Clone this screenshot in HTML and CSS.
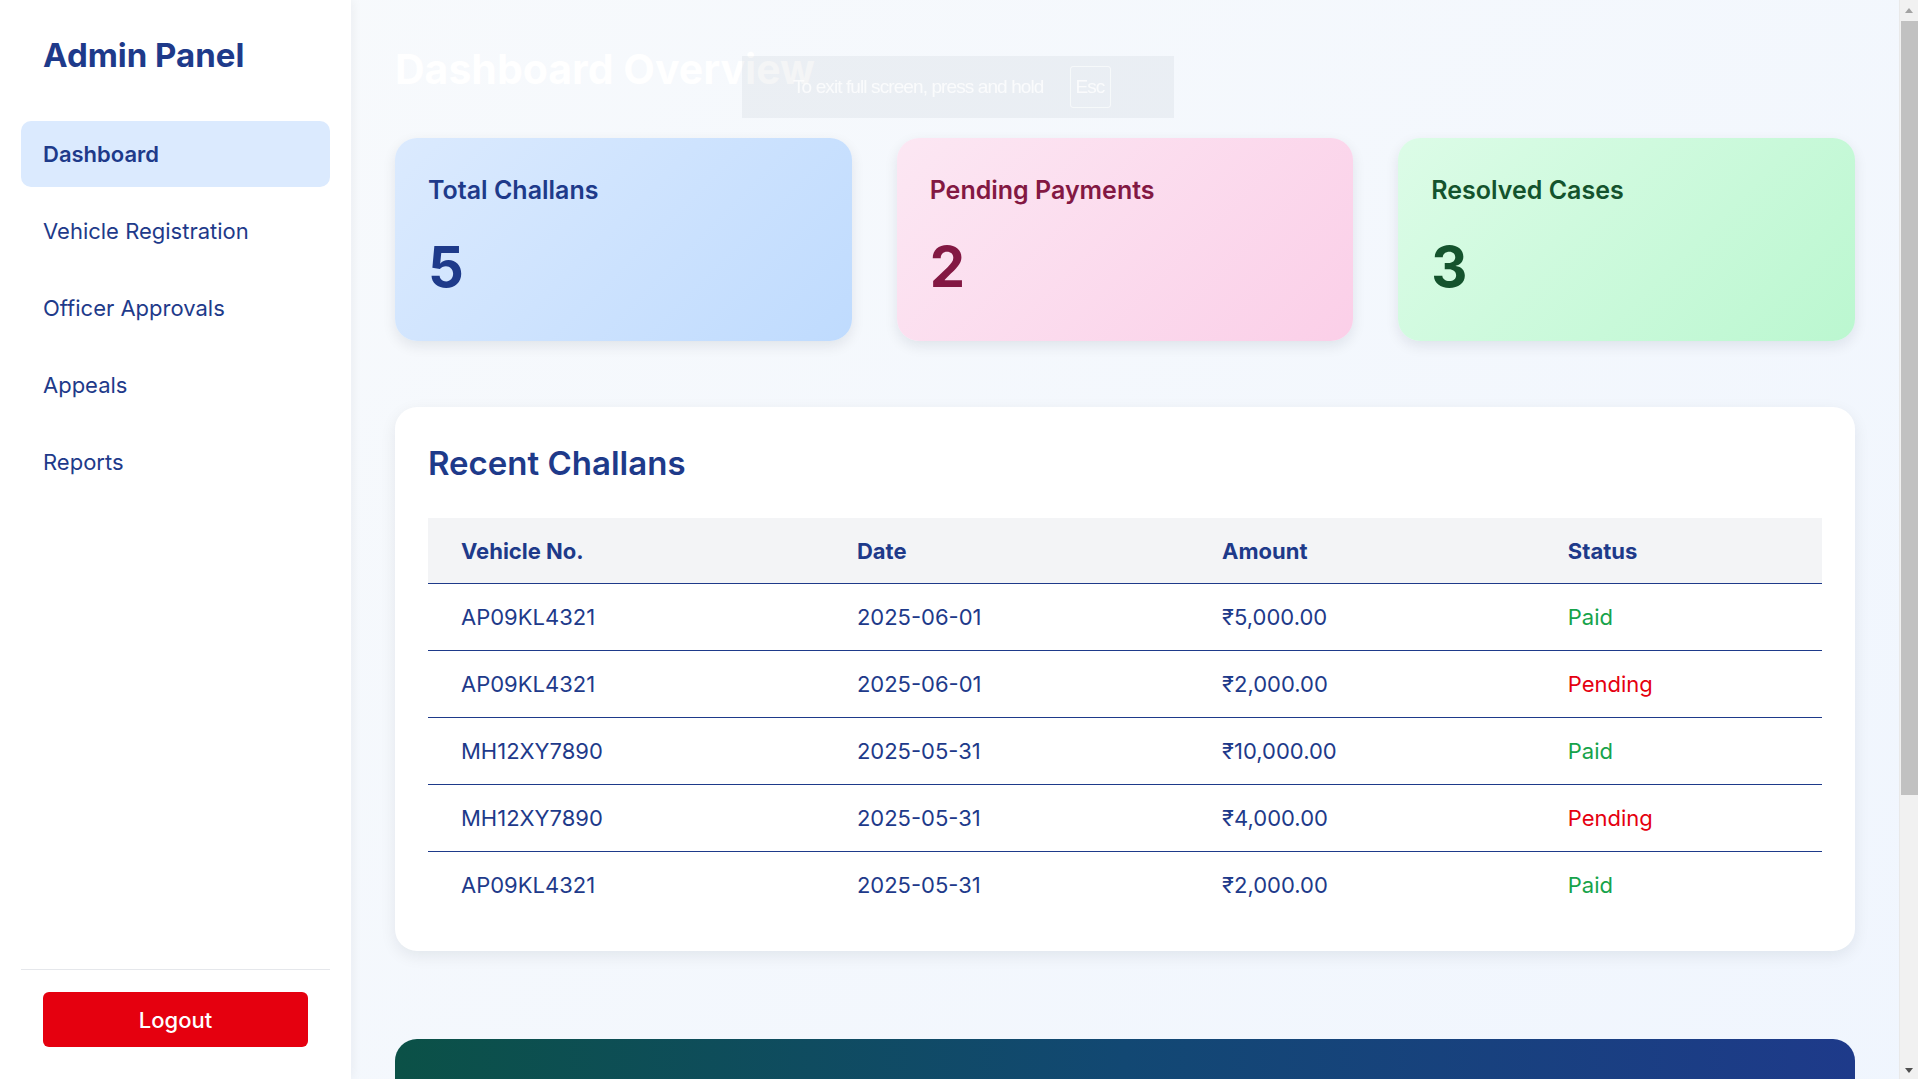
FILE: index.html
```html
<!DOCTYPE html>
<html lang="en">
<head>
<meta charset="utf-8">
<title>Admin Panel</title>
<link rel="stylesheet" href="styles.css">
</head>
<body>
<div class="layout">
  <aside class="sidebar">
    <h1 class="brand">Admin Panel</h1>
    <nav class="nav">
      <a class="nav-item active">Dashboard</a>
      <a class="nav-item">Vehicle Registration</a>
      <a class="nav-item">Officer Approvals</a>
      <a class="nav-item">Appeals</a>
      <a class="nav-item">Reports</a>
    </nav>
    <div class="sidebar-footer">
      <button class="logout">Logout</button>
    </div>
  </aside>

  <main class="main">
    <h2 class="page-title">Dashboard Overview</h2>

    <section class="stats">
      <div class="stat stat-blue">
        <h3 class="stat-label">Total Challans</h3>
        <p class="stat-value">5</p>
      </div>
      <div class="stat stat-pink">
        <h3 class="stat-label">Pending Payments</h3>
        <p class="stat-value">2</p>
      </div>
      <div class="stat stat-green">
        <h3 class="stat-label">Resolved Cases</h3>
        <p class="stat-value">3</p>
      </div>
    </section>

    <section class="panel">
      <h2 class="panel-title">Recent Challans</h2>
      <table class="table">
        <colgroup>
          <col class="col-vehicle">
          <col class="col-date">
          <col class="col-amount">
          <col class="col-status">
        </colgroup>
        <thead>
          <tr><th>Vehicle No.</th><th>Date</th><th>Amount</th><th>Status</th></tr>
        </thead>
        <tbody>
          <tr><td>AP09KL4321</td><td>2025-06-01</td><td>₹5,000.00</td><td class="paid">Paid</td></tr>
          <tr><td>AP09KL4321</td><td>2025-06-01</td><td>₹2,000.00</td><td class="pending">Pending</td></tr>
          <tr><td>MH12XY7890</td><td>2025-05-31</td><td>₹10,000.00</td><td class="paid">Paid</td></tr>
          <tr><td>MH12XY7890</td><td>2025-05-31</td><td>₹4,000.00</td><td class="pending">Pending</td></tr>
          <tr><td>AP09KL4321</td><td>2025-05-31</td><td>₹2,000.00</td><td class="paid">Paid</td></tr>
        </tbody>
      </table>
    </section>

    <section class="banner"></section>
  </main>
</div>

<div class="fs-bubble">
  <span class="fs-text">To exit full screen, press and hold</span>
  <span class="fs-key">Esc</span>
</div>

<div class="scrollbar" aria-hidden="true">
  <span class="sb-arrow sb-up"></span>
  <span class="sb-thumb"></span>
  <span class="sb-arrow sb-down"></span>
</div>
</body>
</html>
```

FILE: styles.css
```css
* { box-sizing: border-box; }

html, body {
  margin: 0;
  padding: 0;
}

body {
  font-family: "Inter", "Noto Sans", sans-serif;
  color: #1e3a8a;
  background: linear-gradient(135deg, #f8fafc 0%, #eff5fe 100%);
}

.layout {
  display: flex;
  align-items: flex-start;
  min-height: 100vh;
  margin-right: 19px;
}

/* Sidebar */
.sidebar {
  position: sticky;
  top: 0;
  flex: 0 0 351px;
  width: 351px;
  height: 100vh;
  background: #ffffff;
  box-shadow: 2px 0 10px rgba(15, 23, 42, 0.05);
  padding: 21px;
  display: flex;
  flex-direction: column;
}

.brand {
  margin: 14px 0 0;
  padding: 0 22px;
  font-size: 33px;
  font-weight: 700;
  line-height: normal;
  color: #1e3a8a;
}

.nav {
  margin-top: 46px;
  display: flex;
  flex-direction: column;
  gap: 11px;
}

.nav-item {
  display: block;
  padding: 20px 22px;
  font-size: 22px;
  line-height: 26px;
  font-weight: 400;
  color: #1e3a8a;
  border-radius: 10px;
  text-decoration: none;
}

.nav-item.active {
  background: #dbeafe;
  font-weight: 600;
}

.sidebar-footer {
  margin-top: auto;
  border-top: 1px solid #e5e7eb;
  padding: 22px 22px 11px;
}

.logout {
  display: block;
  width: 100%;
  height: 55px;
  border: none;
  border-radius: 6px;
  background: #e5000f;
  color: #ffffff;
  font-family: "Inter", sans-serif;
  font-size: 22px;
  font-weight: 500;
}

/* Main */
.main {
  flex: 1 1 auto;
  min-width: 0;
  padding: 44px;
}

.page-title {
  margin: 0 0 44px;
  font-size: 41px;
  font-weight: 700;
  line-height: normal;
  color: #ffffff;
}

.stats {
  display: grid;
  grid-template-columns: repeat(3, 1fr);
  gap: 45px;
}

.stat {
  height: 203px;
  border-radius: 22px;
  padding: 37px 33px 0;
  box-shadow: 0 5px 14px rgba(15, 23, 42, 0.09);
}

.stat-blue { background: linear-gradient(135deg, #dbeafe 0%, #bfdbfe 100%); color: #1e3a8a; }
.stat-pink { background: linear-gradient(135deg, #fce7f3 0%, #fbcfe8 100%); color: #831843; }
.stat-green { background: linear-gradient(135deg, #dcfce7 0%, #bbf7d0 100%); color: #14532d; }

.stat-label {
  margin: 0;
  font-size: 25px;
  font-weight: 600;
  line-height: normal;
}

.stat-value {
  margin: 28px 0 0;
  font-size: 56px;
  font-weight: 700;
  line-height: normal;
}

.panel {
  margin-top: 66px;
  background: #ffffff;
  border-radius: 22px;
  padding: 36px 33px 33px;
  box-shadow: 0 5px 16px rgba(15, 23, 42, 0.08);
}

.panel-title {
  margin: 0 0 35px;
  font-size: 33px;
  font-weight: 600;
  line-height: normal;
  color: #1e3a8a;
}

.table {
  width: 100%;
  border-collapse: collapse;
  table-layout: fixed;
}

.col-vehicle { width: 28.4%; }
.col-date { width: 26.2%; }
.col-amount { width: 24.8%; }
.col-status { width: 20.6%; }

.table th {
  background: #f3f4f6;
  text-align: left;
  padding: 20px 33px 19px;
  font-size: 22px;
  line-height: 26px;
  font-weight: 700;
  color: #1e3a8a;
  border-bottom: 1px solid #1e3a8a;
}

.table td {
  padding: 20px 33px;
  font-size: 22px;
  line-height: 26px;
  font-weight: 400;
  color: #1e3a8a;
  border-bottom: 1px solid #1e3a8a;
}

.table tbody tr:last-child td { border-bottom: none; }

.table td.paid { color: #16a34a; }
.table td.pending { color: #e5000f; }

.banner {
  margin-top: 88px;
  height: 366px;
  border-radius: 22px;
  background: linear-gradient(90deg, #0b5147 0%, #124873 50%, #1e3a8a 100%);
}

/* Browser full-screen notice overlay */
.fs-bubble {
  position: fixed;
  top: 56px;
  left: 742px;
  width: 432px;
  height: 62px;
  background: rgba(120, 130, 140, 0.08);
  display: flex;
  align-items: center;
  padding-left: 51px;
  gap: 26px;
  font-family: "Liberation Sans", sans-serif;
  color: rgba(255, 255, 255, 0.75);
}

.fs-text {
  font-size: 19px;
  letter-spacing: -0.9px;
}

.fs-key {
  display: inline-flex;
  align-items: center;
  justify-content: center;
  width: 41px;
  height: 42px;
  border: 1px solid rgba(255, 255, 255, 0.6);
  border-radius: 3px;
  font-size: 19px;
  letter-spacing: -0.9px;
}

/* Browser scrollbar (drawn over the window edge) */
.scrollbar {
  position: fixed;
  top: 0;
  right: 0;
  width: 19px;
  height: 100vh;
  background: #f1f1f1;
  border-left: 1px solid #e9e9e9;
}

.sb-thumb {
  position: absolute;
  top: 21px;
  left: 1px;
  right: 0;
  height: 774px;
  background: #c1c1c1;
}

.sb-arrow {
  position: absolute;
  left: 50%;
  width: 0;
  height: 0;
  margin-left: -4px;
  border-left: 4px solid transparent;
  border-right: 4px solid transparent;
}

.sb-up {
  top: 8px;
  border-bottom: 5px solid #a3a3a3;
}

.sb-down {
  bottom: 6px;
  border-top: 5px solid #505050;
}
```
